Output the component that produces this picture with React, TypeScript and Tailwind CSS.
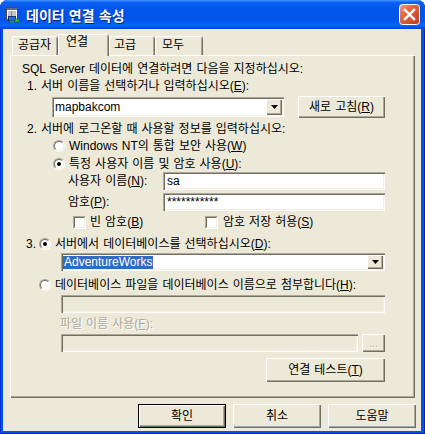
import React from "react";

const raised =
  "shadow-[inset_1px_1px_0_#fff,inset_-1px_-1px_0_#716F64,inset_-2px_-2px_0_#ACA899]";
const sunken =
  "shadow-[inset_1px_1px_0_#ACA899,inset_2px_2px_0_#716F64,inset_-1px_-1px_0_#fff,inset_-2px_-2px_0_#F1EFE2]";
const tabShadow =
  "shadow-[inset_1px_0_0_#fff,inset_0_1px_0_#fff,inset_-1px_0_0_#716F64,inset_-2px_0_0_#ACA899]";

function U({ c }: { c: string }) {
  return <span className="underline underline-offset-[1px]">{c}</span>;
}

function Radio({ checked }: { checked?: boolean }) {
  return (
    <div className="w-[12px] h-[12px] shrink-0 rounded-full border border-t-[#ACA899] border-l-[#ACA899] border-r-white border-b-white">
      <div className="w-[10px] h-[10px] rounded-full border border-t-[#716F64] border-l-[#716F64] border-r-[#F1EFE2] border-b-[#F1EFE2] bg-white flex items-center justify-center">
        {checked && <div className="w-[4px] h-[4px] rounded-full bg-black" />}
      </div>
    </div>
  );
}

function Check() {
  return (
    <div className="w-[13px] h-[13px] shrink-0 border border-t-[#ACA899] border-l-[#ACA899] border-r-white border-b-white">
      <div className="w-[11px] h-[11px] border border-t-[#716F64] border-l-[#716F64] border-r-[#F1EFE2] border-b-[#F1EFE2] bg-white" />
    </div>
  );
}

function Arrow() {
  return (
    <div className={`w-[16px] h-full bg-[#ECE9D8] flex items-center justify-center ${raised}`}>
      <svg width="7" height="4" viewBox="0 0 7 4">
        <polygon points="0,0 7,0 3.5,4" fill="#000" />
      </svg>
    </div>
  );
}

function Btn({
  w,
  children,
  def,
}: {
  w: string;
  children: React.ReactNode;
  def?: boolean;
}) {
  if (def) {
    return (
      <div className={`${w} h-[24px] border border-black`}>
        <div className={`w-full h-full flex items-center justify-center ${raised}`}>{children}</div>
      </div>
    );
  }
  return (
    <div className={`${w} h-[24px] flex items-center justify-center ${raised}`}>{children}</div>
  );
}

export default function App() {
  return (
    <div className="w-[425px] h-[434px] rounded-t-[8px] overflow-hidden bg-[#0055E5] flex flex-col font-['Liberation_Sans','Noto_Sans_CJK_KR',sans-serif] text-[12px] text-black [word-spacing:0.7px] shadow-[inset_1px_0_0_#0831D9,inset_-1px_0_0_#0024A8,inset_0_-1px_0_#0024A8]">
      {/* Title bar */}
      <div className="h-[29px] shrink-0 flex items-center pl-[5px] pr-[5px] bg-[linear-gradient(180deg,#4A98FF_0%,#0A62F4_8%,#0055EA_30%,#0054E6_65%,#0862FD_88%,#0043CF_100%)]">
        <svg width="16" height="16" viewBox="0 0 16 16" className="shrink-0">
          <rect x="1.5" y="0.5" width="11" height="12" fill="#fff" stroke="#4b4b4b" />
          <rect x="2" y="1" width="10" height="2" fill="#5a6b8c" />
          <line x1="3" y1="5" x2="11" y2="5" stroke="#8a8a8a" />
          <line x1="3" y1="7" x2="11" y2="7" stroke="#8a8a8a" />
          <line x1="3" y1="9" x2="11" y2="9" stroke="#8a8a8a" />
          <line x1="6.5" y1="4" x2="6.5" y2="11" stroke="#8a8a8a" />
          <rect x="3.5" y="9.5" width="7" height="4.5" fill="#2b6be0" stroke="#17306e" />
          <rect x="5" y="14" width="4" height="1.5" fill="#2aa02a" />
          <rect x="10" y="12" width="4" height="3" fill="#3cbf3c" stroke="#1a6e1a" strokeWidth="0.8" />
        </svg>
        <div className="ml-[5px] text-[14px] font-bold text-white leading-[18px] [word-spacing:1px] [text-shadow:1px_1px_0_#0A1E8C] font-['Noto_Sans_CJK_KR',sans-serif]">
          데이터 연결 속성
        </div>
        <div className="flex-1" />
        <svg width="21" height="21" viewBox="0 0 21 21" className="shrink-0">
          <defs>
            <linearGradient id="cg" x1="0" y1="0" x2="1" y2="1">
              <stop offset="0" stopColor="#EFA68E" />
              <stop offset="0.35" stopColor="#E06A45" />
              <stop offset="1" stopColor="#C0391A" />
            </linearGradient>
          </defs>
          <rect x="0.5" y="0.5" width="20" height="20" rx="3" fill="url(#cg)" stroke="#fff" />
          <line x1="6" y1="6" x2="15" y2="15" stroke="#fff" strokeWidth="2.4" strokeLinecap="square" />
          <line x1="15" y1="6" x2="6" y2="15" stroke="#fff" strokeWidth="2.4" strokeLinecap="square" />
        </svg>
      </div>

      {/* Body */}
      <div className="flex-1 ml-[3px] mr-[4px] mb-[3px] bg-[#ECE9D8] flex flex-col pl-[7px] pt-[5px]">
        {/* Tabs */}
        <div className="h-[21px] flex items-start pl-[2px]">
          <div className={`w-[46px] h-[19px] mt-[2px] rounded-t-[2px] pl-[6px] pt-[2px] leading-[14px] ${tabShadow}`}>
            공급자
          </div>
          <div className={`relative z-10 w-[51px] h-[22px] rounded-t-[2px] pl-[8px] pt-[1px] leading-[14px] bg-[#ECE9D8] ${tabShadow}`}>
            연결
          </div>
          <div className={`w-[46px] h-[19px] mt-[2px] rounded-t-[2px] pl-[5px] pt-[2px] leading-[14px] ${tabShadow}`}>
            고급
          </div>
          <div className={`w-[48px] h-[19px] mt-[2px] rounded-t-[2px] pl-[7px] pt-[2px] leading-[14px] ${tabShadow}`}>
            모두
          </div>
        </div>

        {/* Panel */}
        <div className={`w-[405px] h-[343px] flex flex-col ${raised}`}>
          <div className="h-[14px] leading-[14px] mt-[7px] ml-[12px] whitespace-nowrap">
            SQL Server 데이터에 연결하려면 다음을 지정하십시오:
          </div>
          <div className="h-[14px] leading-[14px] mt-[3px] ml-[17px] whitespace-nowrap">
            1. 서버 이름을 선택하거나 입력하십시오(<U c="E" />):
          </div>
          <div className="h-[22px] mt-[3px] ml-[42px] flex items-center">
            <div className={`w-[232px] h-[20px] bg-white flex items-stretch p-[2px] ${sunken}`}>
              <div className="flex-1 pl-[1px] leading-[16px]">mapbakcom</div>
              <Arrow />
            </div>
            <div className="ml-[14px]">
              <div className={`w-[87px] h-[22px] flex items-center justify-center ${raised}`}>
                새로 고침(<U c="R" />)
              </div>
            </div>
          </div>
          <div className="h-[14px] leading-[14px] mt-[4px] ml-[17px] whitespace-nowrap">
            2. 서버에 로그온할 때 사용할 정보를 입력하십시오:
          </div>
          <div className="h-[14px] leading-[14px] mt-[3px] ml-[43px] flex items-center whitespace-nowrap">
            <Radio />
            <span className="ml-[4px]">
              Windows NT의 통합 보안 사용(<U c="W" />)
            </span>
          </div>
          <div className="h-[14px] leading-[14px] mt-[4px] ml-[43px] flex items-center whitespace-nowrap">
            <Radio checked />
            <span className="ml-[4px]">
              특정 사용자 이름 및 암호 사용(<U c="U" />):
            </span>
          </div>
          <div className="h-[18px] mt-[1px] ml-[58px] flex items-center">
            <div className="w-[95px] leading-[14px] whitespace-nowrap">
              사용자 이름(<U c="N" />):
            </div>
            <div className={`w-[222px] h-[18px] bg-white pl-[4px] leading-[18px] ${sunken}`}>sa</div>
          </div>
          <div className="h-[18px] mt-[3px] ml-[58px] flex items-center">
            <div className="w-[95px] leading-[14px] whitespace-nowrap">
              암호(<U c="P" />):
            </div>
            <div className={`w-[222px] h-[18px] bg-white pl-[4px] leading-[19px] ${sunken}`}>
              ***********
            </div>
          </div>
          <div className="h-[14px] leading-[14px] mt-[4px] ml-[63px] flex items-center whitespace-nowrap">
            <div className="w-[132px] flex items-center">
              <Check />
              <span className="ml-[4px]">
                빈 암호(<U c="B" />)
              </span>
            </div>
            <Check />
            <span className="ml-[5px]">
              암호 저장 허용(<U c="S" />)
            </span>
          </div>
          <div className="h-[14px] leading-[14px] mt-[8px] ml-[16px] flex items-center whitespace-nowrap">
            <span className="w-[13px]">3.</span>
            <Radio checked />
            <span className="ml-[4px]">
              서버에서 데이터베이스를 선택하십시오(<U c="D" />):
            </span>
          </div>
          <div className={`mt-[2px] ml-[51px] w-[324px] h-[18px] bg-white flex items-stretch p-[2px] ${sunken}`}>
            <div className="flex-1 flex items-center">
              <span className="bg-[#316AC5] text-white px-[1px] leading-[13px] h-[13px]">AdventureWorks</span>
            </div>
            <Arrow />
          </div>
          <div className="h-[14px] leading-[14px] mt-[7px] ml-[29px] flex items-center whitespace-nowrap">
            <Radio />
            <span className="ml-[4px]">
              데이터베이스 파일을 데이터베이스 이름으로 첨부합니다(<U c="H" />):
            </span>
          </div>
          <div className={`mt-[3px] ml-[51px] w-[324px] h-[18px] ${sunken}`} />
          <div className="h-[14px] leading-[14px] mt-[4px] ml-[50px] whitespace-nowrap text-[#ACA899] [text-shadow:1px_1px_0_#fff]">
            파일 이름 사용(<U c="F" />):
          </div>
          <div className="mt-[3px] ml-[51px] h-[18px] flex">
            <div className={`w-[297px] h-[18px] ${sunken}`} />
            <div className={`ml-[4px] w-[23px] h-[18px] flex items-end justify-center pb-[3px] text-[10px] leading-[10px] text-[#ACA899] [text-shadow:1px_1px_0_#fff] ${raised}`}>
              ...
            </div>
          </div>
          <div className="mt-[6px] ml-[256px]">
            <div className={`w-[119px] h-[24px] flex items-center justify-center ${raised}`}>
              연결 테스트(<U c="T" />)
            </div>
          </div>
        </div>

        {/* Bottom buttons */}
        <div className="mt-[6px] mr-[5px] flex justify-end gap-[7px]">
          <Btn w="w-[88px]" def>
            확인
          </Btn>
          <Btn w="w-[88px]">취소</Btn>
          <Btn w="w-[88px]">도움말</Btn>
        </div>
      </div>
    </div>
  );
}
